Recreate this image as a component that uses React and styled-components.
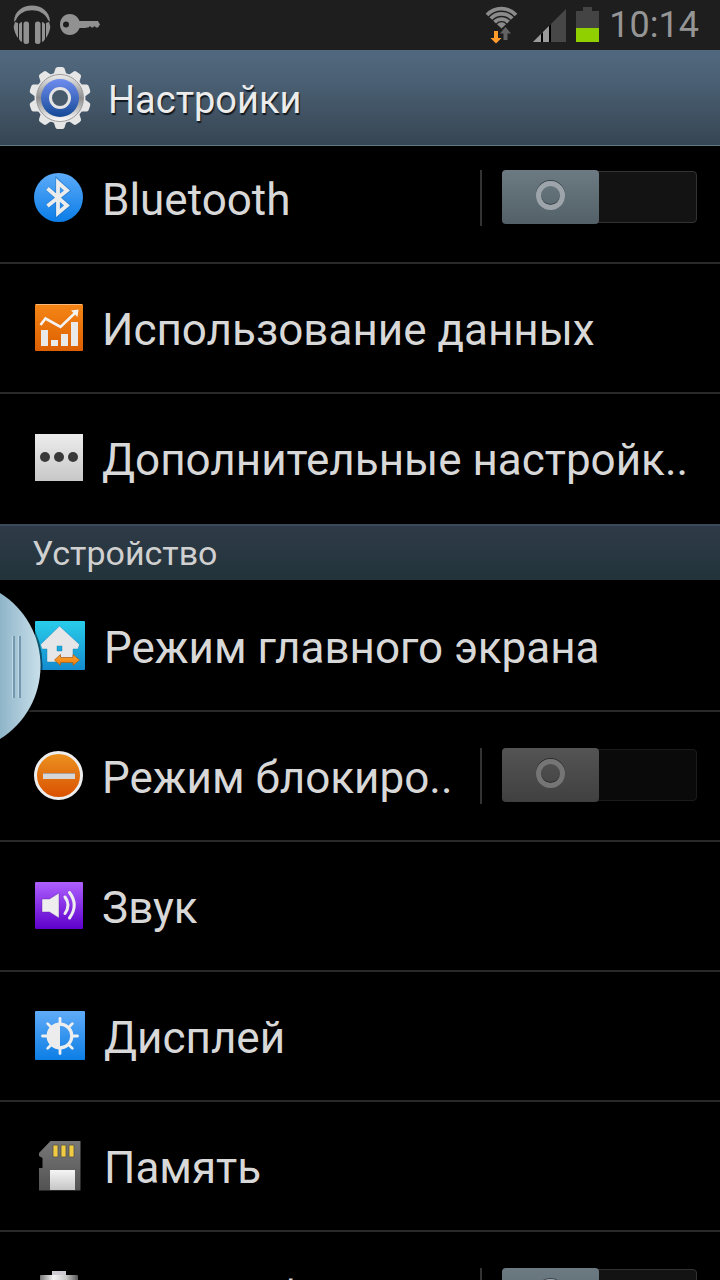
import React from "react";
import styled, { createGlobalStyle } from "styled-components";

const GlobalStyle = createGlobalStyle`
  *, *::before, *::after { box-sizing: border-box; }
  html, body { margin: 0; background: #000; }
  body { font-family: Roboto, "Noto Sans", sans-serif; color: #d8d8d8; }
`;

const Screen = styled.div`
  position: relative;
  display: flex;
  flex-direction: column;
  height: 100vh;
  overflow: hidden;
  background: #000;
`;

const StatusBar = styled.header`
  flex: none;
  display: flex;
  align-items: center;
  justify-content: space-between;
  height: 50px;
  padding: 0 21px 0 12px;
  background: #1e1e1e;
`;

const StatusGroup = styled.div`
  display: flex;
  align-items: center;
  gap: ${(p) => p.$gap}px;
`;

const Clock = styled.time`
  font-size: 36px;
  line-height: 48px;
  font-weight: 400;
  color: #959595;
`;

const TitleBar = styled.div`
  flex: none;
  display: flex;
  align-items: center;
  gap: 16px;
  height: 96px;
  padding: 0 28px;
  background: linear-gradient(#51697f, #4a5f73 35%, #364552);
  border-bottom: 1px solid #5f7a86;
`;

const Title = styled.h1`
  margin: 0;
  padding-top: 4px;
  font-size: 38px;
  line-height: 48px;
  font-weight: 400;
  color: #ececec;
  text-shadow: 1px 2px 1px #101820;
`;

const Scroller = styled.main`
  flex: 1;
  min-height: 0;
  overflow: hidden;
`;

const ScrolledContent = styled.div`
  margin-top: -12px;
`;

const List = styled.ul`
  margin: 0;
  padding: 0;
  list-style: none;
`;

const Row = styled.li`
  display: flex;
  align-items: center;
  height: 130px;
  padding: 0 23px 0 34px;
  border-bottom: 2px solid #292929;

  &:last-child { border-bottom-color: transparent; }
`;

const RowLink = styled.a`
  flex: 1;
  min-width: 0;
  display: flex;
  align-items: center;
  gap: 18px;
  color: inherit;
  text-decoration: none;
`;

const RowText = styled.span`
  padding-top: 4px;
  font-size: 44px;
  line-height: 56px;
  white-space: nowrap;
`;

const SectionHeader = styled.h2`
  margin: 0 0 2px;
  padding: 2px 32px 0;
  height: 56px;
  font-size: 34px;
  line-height: 50px;
  font-weight: 400;
  color: #d0d0d0;
  background: linear-gradient(#2f3b48, #22333a);
  border-top: 2px solid #3b4a59;
`;

const SwitchArea = styled.div`
  flex: none;
  display: flex;
  align-items: center;
  height: 56px;
  padding-left: 20px;
  border-left: 2px solid #333;
`;

const Switch = styled.input`
  appearance: none;
  position: relative;
  display: block;
  width: 195px;
  height: 52px;
  margin: 0 0 2px;
  border: 1px solid #333;
  border-radius: 4px;
  background: #131313;

  &::before {
    content: "";
    position: absolute;
    inset: -2px auto -2px -1px;
    width: 97px;
    border-radius: 4px;
    background: linear-gradient(#6d7a83, #5f6e75 50%, #536068);
  }

  &::after {
    content: "";
    position: absolute;
    top: 9px;
    left: 33px;
    width: 29px;
    height: 29px;
    border: 5px solid #9da5ab;
    border-radius: 50%;
    box-shadow: 0 -1px 0 #384248, inset 0 -1px 0 #384248;
  }

  &:disabled {
    border-color: #1b1b1b;
    background: #0a0a0a;
  }
  &:disabled::before { background: linear-gradient(#545454, #404040); }
  &:disabled::after {
    border-color: #757575;
    box-shadow: 0 -1px 0 #2b2b2b, inset 0 -1px 0 #2b2b2b;
  }
`;

const EdgeHandle = styled.button`
  position: absolute;
  top: 592px;
  left: 0;
  width: 44px;
  height: 150px;
  padding: 0;
  border: 0;
  background: none;

  svg { display: block; }
`;

const Icon = styled.svg`
  flex: none;
  display: block;
`;

function Gradient({ id, from, to }) {
  return (
    <linearGradient id={id} x1="0" y1="0" x2="0" y2="1">
      <stop offset="0" stopColor={from} />
      <stop offset="1" stopColor={to} />
    </linearGradient>
  );
}

function HeadphonesIcon() {
  return (
    <Icon width="40" height="42" viewBox="12 4 40 42" aria-hidden="true" fill="#919191">
      <path d="M14 22C14 0 50 0 50 22L48 20C43 7 21 7 16 20Z" />
      <path d="M15 22l3 1v15C15 34 13 27 14 25.500ZM49 22l-3 1v15c3-4 5-11 4-12.500Z" />
      <path d="M19 24q1.500-2 3-2v20q-2-.5-3-3ZM45 24q-1.500-2-3-2v20q2-.5 3-3Z" />
      <rect x="23.500" y="21.500" width="5.500" height="22.500" rx="2.500" />
      <rect x="35" y="21.500" width="5.500" height="22.500" rx="2.500" />
    </Icon>
  );
}

function KeyIcon() {
  return (
    <Icon width="42" height="24" viewBox="59 14 42 24" aria-hidden="true" fill="#919191">
      <path
        fillRule="evenodd"
        d="M70 15c4.500 0 8 3 9.500 7H98l2 3.500-2 3h-2l-1.500-1.500-1.500 1.500h-1.500L90 27l-1.500 1.500H87L85.500 29H79.500C78 33 74.500 36 70 36c-6 0-10-4.700-10-10.500S64 15 70 15ZM66 22.500a3 3 0 1 0 0 6 3 3 0 1 0 0-6Z"
      />
    </Icon>
  );
}

function WifiIcon() {
  return (
    <Icon width="40" height="40" viewBox="485 5 40 40" aria-hidden="true">
      <g fill="none" stroke="#8b8b8b" strokeWidth="3.800">
        <path d="M488 15A19.800 19.800 0 0 1 517 15" />
        <path d="M491.800 18.500A14.600 14.600 0 0 1 513.200 18.500" />
        <path d="M495.600 22.100A9.400 9.400 0 0 1 509.400 22.100" />
      </g>
      <path d="M498 24.200A6.200 6.200 0 0 1 507 24.200L502.500 28.500Z" fill="#8b8b8b" />
      <path d="M506.500 27L512 33.500H508.500V40H504.500V33.500H501Z" fill="#636363" />
      <path d="M495 31H499V38H502.500L497 43.500L491.500 38H495Z" fill="#ff9b2b" />
    </Icon>
  );
}

function SignalIcon() {
  return (
    <Icon width="34" height="40" viewBox="533 5 34 40" aria-hidden="true">
      <path d="M533 42L566 9V42Z" fill="#474747" />
      <path d="M533 42L549 26V42Z" fill="#9b9b9b" />
      <path d="M541 34l2-2v10h-2ZM549 26l2-2v18h-2Z" fill="#000" />
    </Icon>
  );
}

function BatteryIcon() {
  return (
    <Icon width="24" height="40" viewBox="576 5 24 40" aria-hidden="true">
      <path d="M583 7h9v4h7v31h-23V11h7Z" fill="#444" />
      <path d="M576 28h23v14h-23Z" fill="#90d000" />
    </Icon>
  );
}

const TEETH = Array.from({ length: 10 }, (_, i) => i * 36);

function GearIcon() {
  return (
    <Icon width="64" height="66" viewBox="28 65 64 66" aria-hidden="true">
      <defs>
        <Gradient id="gearBlue" from="#6f8df0" to="#154a96" />
        <linearGradient id="gearRim" x1="0" y1="0" x2="0" y2="1">
          <stop offset="0" stopColor="#eeeeee" />
          <stop offset=".5" stopColor="#8d8d8d" />
          <stop offset="1" stopColor="#ffffff" />
        </linearGradient>
      </defs>
      <g fill="#e6e6e6">
        {TEETH.map((angle) => (
          <path
            key={angle}
            d="M53 76L55.500 68.500Q56 67 58 67H62Q64 67 64.500 68.500L67 76Z"
            transform={`rotate(${angle} 60 98)`}
          />
        ))}
        <circle cx="60" cy="98" r="25.500" />
      </g>
      <circle cx="60" cy="98" r="23.500" fill="url(#gearRim)" stroke="#9a9a9a" strokeWidth="1" />
      <circle cx="60" cy="98" r="19" fill="url(#gearBlue)" />
      <circle cx="60" cy="98" r="9.500" fill="#465a6c" stroke="#e4e4e4" strokeWidth="3" />
    </Icon>
  );
}

function BluetoothIcon() {
  return (
    <Icon width="50" height="50" viewBox="0 0 50 50" aria-hidden="true">
      <defs><Gradient id="btBg" from="#5cabf8" to="#0b7de8" /></defs>
      <circle cx="24.500" cy="24.500" r="24.500" fill="url(#btBg)" />
      <path d="M13.500 15.500L33.500 32.500L23.800 40.500V8.500L33.500 17.500L13.500 33" fill="none" stroke="#1a63ad" strokeWidth="5" opacity=".4" />
      <path d="M13.500 15.500L33 32.500L24 40V9.500L33 17.500L13.500 33" fill="none" stroke="#ececec" strokeWidth="3.800" />
    </Icon>
  );
}

function DataIcon() {
  return (
    <Icon width="50" height="50" viewBox="0 0 50 50" aria-hidden="true">
      <defs><Gradient id="dataBg" from="#f58616" to="#dd5f00" /></defs>
      <rect x="1" y="1" width="48" height="47" rx="1" fill="url(#dataBg)" />
      <path d="M2 1.500H48" stroke="#f9b878" />
      <path d="M7 27h7v16H7ZM17 37h7v6h-7ZM27 31h7v12h-7ZM37 19h7v24h-7Z" fill="#e9e9e9" />
      <path d="M6.500 22L11.500 15.500L26.500 24L41 10" fill="none" stroke="#f3f3f3" strokeWidth="2.600" />
      <path d="M37 7.500L44.500 6.500L43.500 14Z" fill="#f3f3f3" />
    </Icon>
  );
}

function MoreIcon() {
  return (
    <Icon width="50" height="50" viewBox="0 0 50 50" aria-hidden="true">
      <defs><Gradient id="moreBg" from="#ececec" to="#c8c8c8" /></defs>
      <rect x="1" y="1" width="48" height="47" fill="url(#moreBg)" />
      <g fill="#393939">
        <circle cx="11" cy="24" r="5" />
        <circle cx="25" cy="24" r="5" />
        <circle cx="39" cy="24" r="5" />
      </g>
    </Icon>
  );
}

function HomeIcon() {
  return (
    <Icon width="52" height="50" viewBox="0 0 52 50" aria-hidden="true">
      <defs>
        <Gradient id="homeBg" from="#29cdea" to="#138bd0" />
        <Gradient id="homeArrow" from="#ffa436" to="#ee7d08" />
      </defs>
      <rect x="1" y="0" width="50" height="49" rx="1" fill="url(#homeBg)" />
      <path
        fillRule="evenodd"
        d="M25.500 5L45.500 23.500L44 28H39V41H13V28H8L6.500 23.500ZM23 25v5h5v-5Z"
        fill="#e6e6e8"
        stroke="#087fb2"
        strokeOpacity=".4"
      />
      <path d="M20.500 39L26.500 33.500V36.500H39V33.500L45.500 39L39 44.500V41.500H26.500V44.500Z" fill="url(#homeArrow)" stroke="#a76422" strokeWidth=".8" />
    </Icon>
  );
}

function BlockIcon() {
  return (
    <Icon width="50" height="50" viewBox="0 0 50 50" aria-hidden="true">
      <defs><Gradient id="blockBg" from="#ec9320" to="#d94f00" /></defs>
      <circle cx="24.500" cy="24.500" r="23" fill="url(#blockBg)" stroke="#ededed" strokeWidth="3" />
      <rect x="9" y="22" width="32" height="6" fill="#d6d6d6" />
      <path d="M9 22.500h32" stroke="#aaa0a0" />
    </Icon>
  );
}

function SoundIcon() {
  return (
    <Icon width="50" height="50" viewBox="0 0 50 50" aria-hidden="true">
      <defs><Gradient id="soundBg" from="#ae60ff" to="#5e00cb" /></defs>
      <rect x="1" y="1" width="48" height="47" rx="1" fill="url(#soundBg)" />
      <path d="M8 18H15.500L25 12V37L15.500 31H8Z" fill="#eee" stroke="#5f20a0" strokeOpacity=".4" />
      <g fill="none" stroke="#eee" strokeWidth="3" strokeLinecap="round">
        <path d="M31 16Q37 24 31 32.500" />
        <path d="M35.500 11.500Q45 24 35.500 37" />
      </g>
    </Icon>
  );
}

const RAYS = [0, 45, 90, 135, 180, 225, 270, 315];

function DisplayIcon() {
  return (
    <Icon width="52" height="50" viewBox="0 0 52 50" aria-hidden="true">
      <defs><Gradient id="displayBg" from="#60abf8" to="#0c7ee5" /></defs>
      <rect x="1" y="0" width="50" height="49" rx="1" fill="url(#displayBg)" />
      <g stroke="#f0f0f0" strokeWidth="2.800" strokeLinecap="round">
        {RAYS.map((angle) => (
          <path key={angle} d="M26 13V7.500" transform={`rotate(${angle} 26 25)`} />
        ))}
      </g>
      <circle cx="26" cy="25" r="11.800" fill="none" stroke="#eee" strokeWidth="3.200" />
      <path d="M26 12V38A13 13 0 0 1 26 12Z" fill="#ececec" />
    </Icon>
  );
}

function MemoryIcon() {
  return (
    <Icon width="52" height="50" viewBox="0 0 52 50" aria-hidden="true">
      <defs>
        <Gradient id="cardBg" from="#787878" to="#525252" />
        <Gradient id="cardLabel" from="#f5f5f5" to="#c5c5c5" />
      </defs>
      <path d="M16.500 0H46.500V49.500H5V27H8.500V17L5 15V12Z" fill="url(#cardBg)" />
      <path d="M19 4h5v12h-5ZM27 4h5v12h-5ZM35 4h5v12h-5Z" fill="#f1cc42" stroke="#54514a" strokeWidth=".8" />
      <path d="M16 29h25v20H16Z" fill="url(#cardLabel)" />
    </Icon>
  );
}

function PowerIcon() {
  return (
    <Icon width="50" height="50" viewBox="0 0 50 50" aria-hidden="true">
      <defs>
        <linearGradient id="cell" x1="0" y1="0" x2="1" y2="0">
          <stop offset="0" stopColor="#777" />
          <stop offset=".35" stopColor="#f5f5f5" />
          <stop offset=".7" stopColor="#c8c8c8" />
          <stop offset="1" stopColor="#555" />
        </linearGradient>
      </defs>
      <path d="M18 0h14v5h-14Z" fill="#cfcbd2" />
      <rect x="6" y="4" width="38" height="46" rx="1" fill="url(#cell)" />
    </Icon>
  );
}

const CONNECTIONS = [
  { id: "bluetooth", label: "Bluetooth", icon: BluetoothIcon, toggle: true },
  { id: "data", label: "Использование данных", icon: DataIcon },
  { id: "more", label: "Дополнительные настройк..", icon: MoreIcon },
];

const DEVICE = [
  { id: "home", label: "Режим главного экрана", icon: HomeIcon },
  { id: "blocking", label: "Режим блокиро..", icon: BlockIcon, toggle: true, disabled: true },
  { id: "sound", label: "Звук", icon: SoundIcon },
  { id: "display", label: "Дисплей", icon: DisplayIcon },
  { id: "memory", label: "Память", icon: MemoryIcon },
  { id: "power", label: "Энергосбереж..", icon: PowerIcon, toggle: true },
];

function SettingRow({ id, label, icon: RowIcon, toggle, disabled }) {
  return (
    <Row>
      <RowLink href={`#${id}`}>
        <RowIcon />
        <RowText id={`${id}-label`}>{label}</RowText>
      </RowLink>
      {toggle && (
        <SwitchArea>
          <Switch type="checkbox" role="switch" disabled={disabled} aria-labelledby={`${id}-label`} />
        </SwitchArea>
      )}
    </Row>
  );
}

export default function App() {
  return (
    <Screen>
      <GlobalStyle />
      <StatusBar>
        <StatusGroup $gap={7}>
          <HeadphonesIcon />
          <KeyIcon />
        </StatusGroup>
        <StatusGroup $gap={9}>
          <WifiIcon />
          <SignalIcon />
          <BatteryIcon />
          <Clock>10:14</Clock>
        </StatusGroup>
      </StatusBar>
      <TitleBar>
        <GearIcon />
        <Title>Настройки</Title>
      </TitleBar>
      <Scroller>
        <ScrolledContent>
          <List>
            {CONNECTIONS.map((item) => <SettingRow key={item.id} {...item} />)}
          </List>
          <SectionHeader>Устройство</SectionHeader>
          <List>
            {DEVICE.map((item) => <SettingRow key={item.id} {...item} />)}
          </List>
        </ScrolledContent>
      </Scroller>
      <EdgeHandle type="button" aria-label="Открыть панель приложений">
        <svg width="44" height="150" viewBox="0 0 44 150" aria-hidden="true">
          <defs>
            <linearGradient id="handle" x1="0" y1="0" x2="1" y2="0">
              <stop offset="0" stopColor="#8fb5c9" />
              <stop offset="1" stopColor="#c8dfea" />
            </linearGradient>
          </defs>
          <path d="M0 1A86 86 0 0 1 0 147" fill="none" stroke="#000" strokeOpacity=".5" strokeWidth="4" />
          <path d="M0 1A86 86 0 0 1 0 147Z" fill="url(#handle)" />
          <path d="M14 44V106M20 44V106" stroke="#7299b0" strokeWidth="2" />
          <path d="M12.500 44V106M18.500 44V106" stroke="#c0d8e4" />
        </svg>
      </EdgeHandle>
    </Screen>
  );
}
